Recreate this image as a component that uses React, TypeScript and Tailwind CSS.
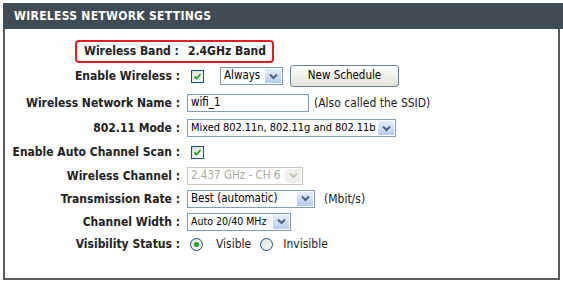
import React from "react";

const font = { fontFamily: '"DejaVu Sans Condensed", "DejaVu Sans", Tahoma, sans-serif' };

function Check() {
  return (
    <div className="w-[13px] h-[13px] border border-[#1c5180] bg-gradient-to-br from-[#dcdcd7] to-white flex items-center justify-center">
      <svg width="9" height="9" viewBox="0 0 9 9">
        <path d="M1.5 4.5 L3.5 6.5 L7.5 2" fill="none" stroke="#21a121" strokeWidth="1.8" />
      </svg>
    </div>
  );
}

function Arrow({ disabled }: { disabled?: boolean }) {
  return (
    <div
      className={
        "w-[17px] h-full flex items-center justify-center border-l border-white " +
        (disabled ? "bg-[#f0f0ee]" : "bg-gradient-to-b from-[#e6eefc] to-[#b7cbf5]")
      }
    >
      <svg width="9" height="7" viewBox="0 0 9 7">
        <path
          d="M1 1.5 L4.5 5 L8 1.5"
          fill="none"
          stroke={disabled ? "#c9c7ba" : "#4d6185"}
          strokeWidth="2"
        />
      </svg>
    </div>
  );
}

function Select({
  text,
  width,
  disabled,
  size = "text-[11.5px]",
}: {
  text: string;
  width: string;
  disabled?: boolean;
  size?: string;
}) {
  return (
    <div
      className={
        "h-[18px] flex items-stretch border bg-white " +
        width +
        (disabled ? " border-[#c9c7ba]" : " border-[#7f9db9]")
      }
    >
      <div
        className={
          "flex-1 flex items-center pl-[3px] whitespace-nowrap overflow-hidden " +
          size +
          (disabled ? " text-[#aca899]" : " text-black")
        }
      >
        {text}
      </div>
      <div className="p-px">
        <Arrow disabled={disabled} />
      </div>
    </div>
  );
}

function Radio({ on }: { on?: boolean }) {
  return (
    <div className="w-[13px] h-[13px] rounded-full border border-[#1c5180] bg-gradient-to-br from-[#dcdcd7] to-white flex items-center justify-center">
      {on && <div className="w-[5px] h-[5px] rounded-full bg-[#21a121]" />}
    </div>
  );
}

function Row({ label, h, children }: { label: string; h: string; children: React.ReactNode }) {
  return (
    <div className={"flex items-center " + h}>
      <div className="w-[175px] text-right font-bold text-[12px] text-[#222] whitespace-nowrap">{label}</div>
      <div className="flex items-center pl-[7px] text-[12px] text-[#222] whitespace-nowrap">{children}</div>
    </div>
  );
}

export default function App() {
  return (
    <div className="w-[563px] h-[283px] bg-white pt-[3px] pl-[3px]" style={font}>
      <div className="h-[26px] bg-[#414b53] flex items-center pl-[11px] text-white font-bold text-[12px] tracking-[0.3px]">
        WIRELESS NETWORK SETTINGS
      </div>
      <div className="w-[557px] h-[251px] border-l-2 border-r-2 border-b-2 border-[#5c5c5c] pt-[10px]">
        <div className="h-[24px] flex items-center pl-[70px]">
          <div className="h-[23px] flex items-center border-2 border-[#e02020] rounded-[4px] pl-[7px] pr-[6px] font-bold text-[12px] text-[#222] whitespace-nowrap">
            Wireless Band :<span className="ml-[9px]">2.4GHz Band</span>
          </div>
        </div>
        <Row label="Enable Wireless :" h="h-[26px]">
          <div className="ml-[4px]"><Check /></div>
          <div className="ml-[16px]"><Select text="Always" width="w-[63px]" /></div>
          <div className="ml-[7px] h-[22px] w-[109px] rounded-[3px] border border-[#6f7f94] bg-gradient-to-b from-white to-[#e3e3db] flex items-center justify-center text-[11.5px] text-black">
            New Schedule
          </div>
        </Row>
        <Row label="Wireless Network Name :" h="h-[27px]">
          <div className="w-[122px] h-[18px] border border-[#7f9db9] bg-white flex items-center pl-[3px] text-[11.5px] text-black">
            wifi_1
          </div>
          <span className="ml-[5px]">(Also called the SSID)</span>
        </Row>
        <Row label="802.11 Mode :" h="h-[24px]">
          <Select
            text="Mixed 802.11n, 802.11g and 802.11b"
            width="w-[209px]"
            size="text-[11px] tracking-[-0.05px]"
          />
        </Row>
        <Row label="Enable Auto Channel Scan :" h="h-[24px]">
          <div className="ml-[4px]"><Check /></div>
        </Row>
        <Row label="Wireless Channel :" h="h-[23px]">
          <Select text="2.437 GHz - CH 6" width="w-[116px]" disabled />
        </Row>
        <Row label="Transmission Rate :" h="h-[23px]">
          <Select text="Best (automatic)" width="w-[128px]" />
          <span className="ml-[9px]">(Mbit/s)</span>
        </Row>
        <Row label="Channel Width :" h="h-[23px]">
          <Select text="Auto 20/40 MHz" width="w-[104px]" size="text-[10.5px]" />
        </Row>
        <Row label="Visibility Status :" h="h-[22px]">
          <div className="ml-[3px]"><Radio on /></div>
          <span className="ml-[13px]">Visible</span>
          <div className="ml-[9px]"><Radio /></div>
          <span className="ml-[10px]">Invisible</span>
        </Row>
      </div>
    </div>
  );
}
